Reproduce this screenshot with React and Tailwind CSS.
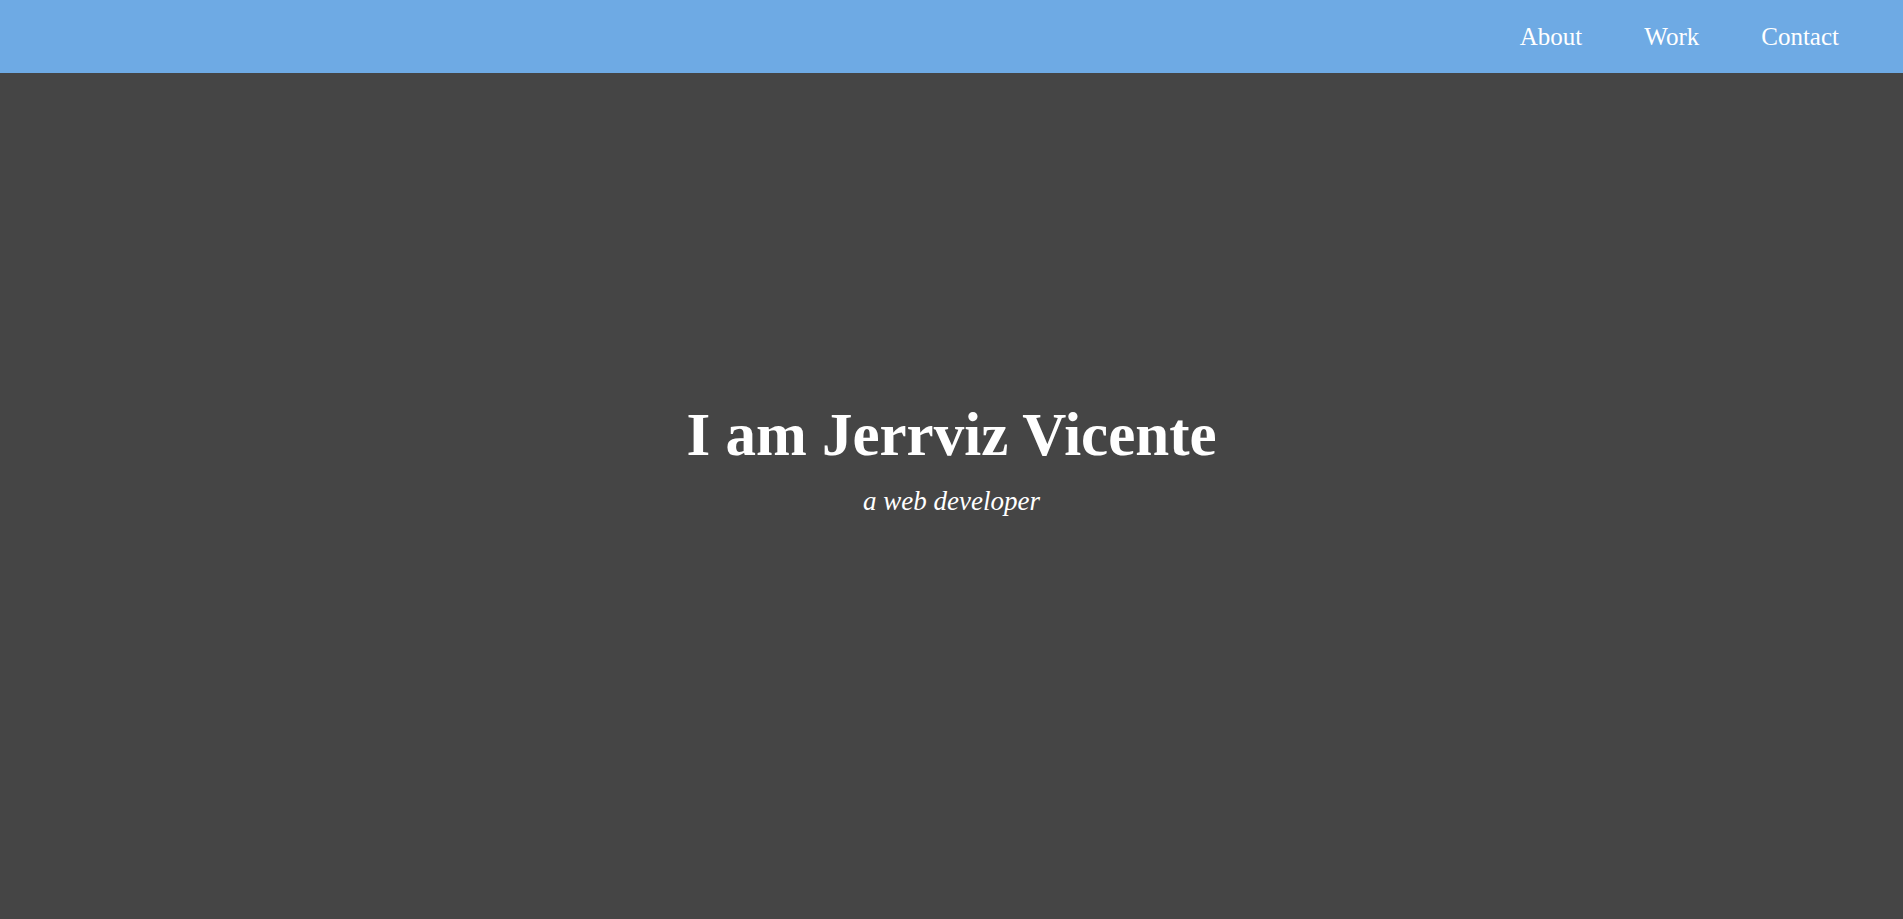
export default function App() {
  const links = ["About", "Work", "Contact"];

  return (
    <div className="min-h-screen bg-[#454545] font-['Liberation_Serif',serif] text-white">
      <header className="h-[73px] bg-[#6eaae4] flex items-center justify-end pr-16">
        <nav className="flex items-center gap-[62px]">
          {links.map((name) => (
            <a key={name} href="#" className="text-[25px] leading-none text-white">
              {name}
            </a>
          ))}
        </nav>
      </header>

      <main className="h-[846px] flex flex-col items-center pt-[331px]">
        <h1 className="text-[61px] leading-none font-bold">I am Jerrviz Vicente</h1>
        <p className="mt-[23px] text-[27px] leading-none italic">a web developer</p>
      </main>
    </div>
  );
}
